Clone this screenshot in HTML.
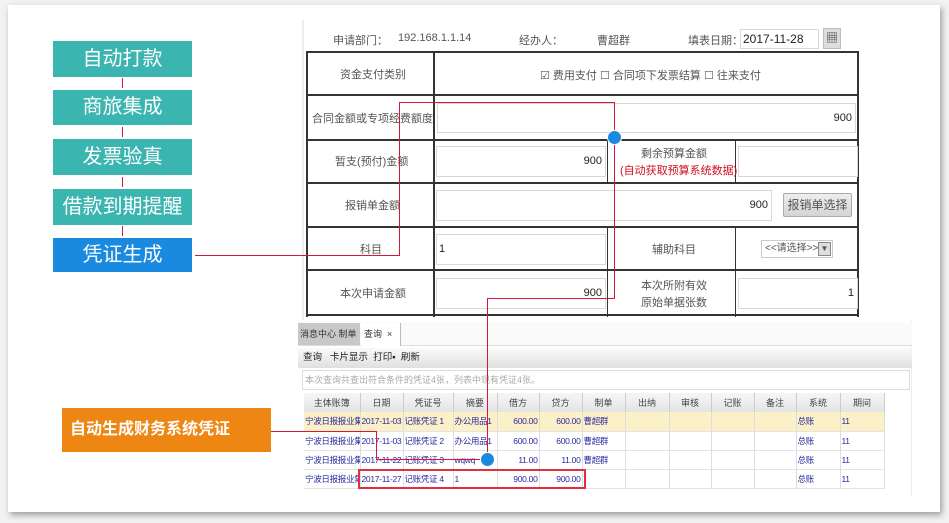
<!DOCTYPE html>
<html><head><meta charset="utf-8"><style>
*{margin:0;padding:0;box-sizing:border-box}
body{width:949px;height:523px;background:#f2f2f2;position:relative;overflow:hidden;font-family:"Liberation Sans","Noto Sans CJK SC",sans-serif}
.a{position:absolute}
.card{left:8px;top:5px;width:932px;height:507px;background:#fff;box-shadow:2px 3px 6px rgba(0,0,0,.35)}
.btn{left:53px;width:139px;color:#fff;font-size:20px;text-align:center;background:#3ab5b0;height:36px;line-height:36px}
.t{font-size:11px;color:#555;white-space:nowrap}
.hl{background:#333;height:2px}
.vl{background:#333;width:2px}
.inp{border:1px solid #d8d8d8;background:#fff;font-size:11px;color:#222;text-align:right;padding-right:3px}
.r{background:#d6163a}
.g td{border-right:1px solid #ddd;border-bottom:1px solid #e4e4e4;font-size:8.5px;letter-spacing:-0.3px;color:#2a2aa0;height:19px;line-height:18px;padding:0 1px;white-space:nowrap;overflow:hidden}
.g th{border-right:1px solid #ccc;font-size:9px;color:#444;font-weight:normal;height:19px;line-height:18px;background:linear-gradient(#f6f6f6,#e4e4e4)}
</style></head><body>
<div class="a card"></div>
<div class="a btn" style="top:41px">自动打款</div>
<div class="a btn" style="top:90px;height:35px;line-height:35px">商旅集成</div>
<div class="a btn" style="top:139px">发票验真</div>
<div class="a btn" style="top:189px">借款到期提醒</div>
<div class="a btn" style="top:238px;height:34px;line-height:34px;background:#1a8ae0">凭证生成</div>
<div class="a r" style="left:122px;top:78px;width:1px;height:10px"></div>
<div class="a r" style="left:122px;top:127px;width:1px;height:10px"></div>
<div class="a r" style="left:122px;top:177px;width:1px;height:10px"></div>
<div class="a r" style="left:122px;top:226px;width:1px;height:10px"></div>
<div class="a" style="left:62px;top:408px;width:209px;height:44px;background:#ee8614;color:#fff;font-weight:bold;font-size:16px;line-height:44px;padding-left:8px">自动生成财务系统凭证</div>

<!-- form -->
<div class="a" style="left:302px;top:20px;width:2px;height:300px;background:#e8eef6"></div>
<div class="a t" style="left:333px;top:32px">申请部门：</div>
<div class="a t" style="left:398px;top:32px">192.168.1.1.14</div>
<div class="a t" style="left:519px;top:32px">经办人：</div>
<div class="a t" style="left:597px;top:32px">曹超群</div>
<div class="a t" style="left:688px;top:32px">填表日期：</div>
<div class="a inp" style="left:740px;top:29px;width:79px;height:20px;text-align:left;padding-left:2px;line-height:18px;font-size:12px">2017-11-28</div>
<div class="a" style="left:823px;top:28px;width:18px;height:21px;background:#ddd;border:1px solid #bbb;font-size:12px;text-align:center;line-height:19px;color:#444">▦</div>

<div class="a hl" style="left:306px;top:51px;width:553px"></div>
<div class="a hl" style="left:306px;top:94px;width:553px"></div>
<div class="a hl" style="left:306px;top:139px;width:553px"></div>
<div class="a hl" style="left:306px;top:182px;width:553px"></div>
<div class="a hl" style="left:306px;top:226px;width:553px"></div>
<div class="a hl" style="left:306px;top:269px;width:553px"></div>
<div class="a hl" style="left:306px;top:314px;width:553px"></div>
<div class="a vl" style="left:306px;top:51px;height:266px"></div>
<div class="a vl" style="left:433px;top:51px;height:266px"></div>
<div class="a vl" style="left:857px;top:51px;height:266px"></div>
<div class="a" style="left:607px;top:140px;width:1px;height:43px;background:#333"></div>
<div class="a" style="left:607px;top:227px;width:1px;height:90px;background:#333"></div>
<div class="a" style="left:735px;top:140px;width:1px;height:43px;background:#333"></div>
<div class="a" style="left:735px;top:227px;width:1px;height:90px;background:#333"></div>

<div class="a t" style="left:340px;top:66px">资金支付类别</div>
<div class="a t" style="left:540px;top:67px">☑ 费用支付 ☐ 合同项下发票结算 ☐ 往来支付</div>
<div class="a t" style="left:312px;top:110px">合同金额或专项经费额度</div>
<div class="a inp" style="left:437px;top:103px;width:419px;height:30px;line-height:28px">900</div>
<div class="a t" style="left:335px;top:153px">暂支(预付)金额</div>
<div class="a inp" style="left:436px;top:146px;width:170px;height:31px;line-height:29px">900</div>
<div class="a t" style="left:641px;top:145px">剩余预算金额</div>
<div class="a t" style="left:620px;top:162px;color:#d01020">(自动获取预算系统数据)</div>
<div class="a inp" style="left:738px;top:146px;width:120px;height:31px"></div>
<div class="a t" style="left:345px;top:197px">报销单金额</div>
<div class="a inp" style="left:436px;top:190px;width:336px;height:31px;line-height:29px">900</div>
<div class="a" style="left:783px;top:193px;width:69px;height:24px;background:linear-gradient(#eee,#d4d4d4);border:1px solid #aaa;border-radius:2px;font-size:12px;color:#555;text-align:center;line-height:22px">报销单选择</div>
<div class="a t" style="left:360px;top:241px">科目</div>
<div class="a inp" style="left:436px;top:234px;width:170px;height:31px;line-height:29px;text-align:left;padding-left:2px">1</div>
<div class="a t" style="left:652px;top:241px">辅助科目</div>
<div class="a" style="left:761px;top:240px;width:72px;height:18px;border:1px solid #ccc;font-size:10px;color:#555;line-height:16px;padding-left:3px">&lt;&lt;请选择&gt;&gt;<span style="position:absolute;right:1px;top:1px;width:13px;height:14px;background:#ddd;border:1px solid #888;font-size:8px;text-align:center;line-height:12px">▼</span></div>
<div class="a t" style="left:340px;top:285px">本次申请金额</div>
<div class="a inp" style="left:436px;top:278px;width:170px;height:31px;line-height:29px">900</div>
<div class="a t" style="left:641px;top:277px">本次所附有效</div>
<div class="a t" style="left:641px;top:294px">原始单据张数</div>
<div class="a inp" style="left:738px;top:278px;width:120px;height:31px;line-height:29px">1</div>

<!-- bottom grid -->
<div class="a" style="left:298px;top:320px;width:614px;height:177px;background:#fff;border-right:1px solid #eee"></div>
<div class="a" style="left:298px;top:322px;width:614px;height:24px;background:#fafafa;border-bottom:1px solid #ddd"></div>
<div class="a" style="left:298px;top:323px;width:62px;height:22px;background:#c8c8c8;font-size:9px;line-height:22px;color:#333;padding-left:2px">消息中心 制单</div>
<div class="a" style="left:361px;top:323px;width:40px;height:23px;background:#fff;border-right:1px solid #bbb;font-size:9px;line-height:22px;padding-left:3px;color:#333">查询 &nbsp;×</div>
<div class="a" style="left:298px;top:348px;width:614px;height:20px;background:linear-gradient(#fafafa,#e0e0e0);font-size:9.5px;line-height:20px;padding-left:5px;color:#222">查询 &nbsp; 卡片显示 &nbsp;打印▪ &nbsp;刷新</div>
<div class="a" style="left:302px;top:370px;width:608px;height:20px;border:1px solid #ddd;font-size:9px;line-height:18px;color:#aaa;padding-left:2px">本次查询共查出符合条件的凭证4张，列表中现有凭证4张。</div>
<table class="a g" style="left:304px;top:393px;border-collapse:collapse;table-layout:fixed;width:580px">
<colgroup><col style="width:56px"><col style="width:43px"><col style="width:50px"><col style="width:44px"><col style="width:42px"><col style="width:43px"><col style="width:43px"><col style="width:44px"><col style="width:42px"><col style="width:43px"><col style="width:42px"><col style="width:44px"><col style="width:44px"></colgroup>
<tr><th>主体账簿</th><th>日期</th><th>凭证号</th><th>摘要</th><th>借方</th><th>贷方</th><th>制单</th><th>出纳</th><th>审核</th><th>记账</th><th>备注</th><th>系统</th><th>期间</th></tr>
<tr style="background:#fcf0c8"><td>宁波日报报业集...</td><td>2017-11-03</td><td>记账凭证 1</td><td>办公用品1</td><td style="text-align:right">600.00</td><td style="text-align:right">600.00</td><td>曹超群</td><td></td><td></td><td></td><td></td><td>总账</td><td>11</td></tr>
<tr><td>宁波日报报业集...</td><td>2017-11-03</td><td>记账凭证 2</td><td>办公用品1</td><td style="text-align:right">600.00</td><td style="text-align:right">600.00</td><td>曹超群</td><td></td><td></td><td></td><td></td><td>总账</td><td>11</td></tr>
<tr><td>宁波日报报业集...</td><td>2017-11-22</td><td>记账凭证 3</td><td>wqwq</td><td style="text-align:right">11.00</td><td style="text-align:right">11.00</td><td>曹超群</td><td></td><td></td><td></td><td></td><td>总账</td><td>11</td></tr>
<tr><td>宁波日报报业集...</td><td>2017-11-27</td><td>记账凭证 4</td><td>1</td><td style="text-align:right">900.00</td><td style="text-align:right">900.00</td><td></td><td></td><td></td><td></td><td></td><td>总账</td><td>11</td></tr>
</table>
<div class="a" style="left:358px;top:469px;width:228px;height:20px;border:2px solid #e03040"></div>

<!-- red connectors -->
<div class="a r" style="left:195px;top:255px;width:205px;height:1px"></div>
<div class="a r" style="left:399px;top:102px;width:1px;height:154px"></div>
<div class="a r" style="left:399px;top:102px;width:216px;height:1px"></div>
<div class="a r" style="left:614px;top:102px;width:1px;height:197px"></div>
<div class="a r" style="left:487px;top:298px;width:128px;height:1px"></div>
<div class="a r" style="left:487px;top:298px;width:1px;height:161px"></div>
<div class="a r" style="left:271px;top:431px;width:106px;height:1px"></div>
<div class="a r" style="left:376px;top:431px;width:1px;height:29px"></div>
<div class="a r" style="left:376px;top:459px;width:111px;height:1px"></div>
<div class="a" style="left:607px;top:130px;width:15px;height:15px;border-radius:50%;background:#1a8ae0;border:1px solid #fff"></div>
<div class="a" style="left:480px;top:452px;width:15px;height:15px;border-radius:50%;background:#1a8ae0;border:1px solid #fff"></div>
</body></html>
